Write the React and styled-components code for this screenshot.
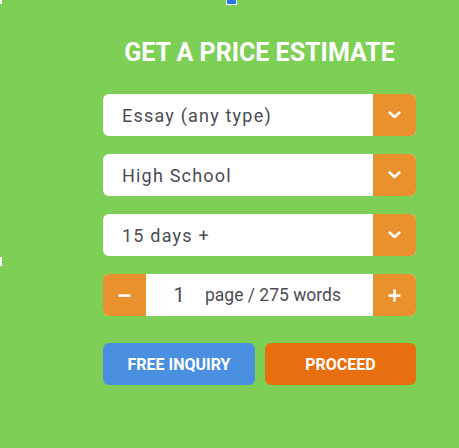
import React, { useState } from "react"
import styled, { createGlobalStyle } from "styled-components"

const GlobalStyle = createGlobalStyle`
  html, body {
    margin: 0;
    padding: 0;
    background: #7ecf55;
  }
  body {
    font-family: Roboto, "Liberation Sans", Arial, sans-serif;
  }
`

export const Page = styled.div`
  position: relative;
  height: 448px;
  background: #7ecf55;
  padding-top: 40px;
  box-sizing: border-box;
`

export const Handle = styled.span`
  position: absolute;
  top: ${props => props.top}px;
  left: ${props => props.left}px;
  width: ${props => props.w}px;
  height: ${props => props.h}px;
  background: ${props => props.color};
  border: 1px solid #ffffff;
  box-sizing: border-box;
`

export const Form = styled.div`
  width: 313px;
  margin-left: 103px;
  display: flex;
  flex-direction: column;
  gap: 18px;
`

export const Title = styled.h2`
  margin: 0 0 10px;
  text-align: center;
  color: #ffffff;
  font-size: 25px;
  line-height: 26px;
  font-weight: 700;
  text-transform: uppercase;
`

export const Field = styled.div`
  display: flex;
  height: 42px;
  border-radius: 6px;
  overflow: hidden;
  background: #ffffff;
`

export const FieldText = styled.div`
  flex: 1;
  display: flex;
  align-items: center;
  padding-left: 19px;
  color: #4b4b55;
  font-size: 18px;
  letter-spacing: 1.2px;
`

export const SideButton = styled.button`
  width: 43px;
  flex: none;
  border: 0;
  padding: 0;
  display: flex;
  align-items: center;
  justify-content: center;
  background: #e8912d;
  color: #ffffff;
  cursor: pointer;
`

export const Counter = styled.div`
  flex: 1;
  display: flex;
  align-items: center;
  gap: 14px;
  padding-left: 21px;
  color: #4b4b55;
  font-size: 17.5px;
`

export const Count = styled.span`
  width: 24px;
  text-align: center;
  font-size: 20px;
`

export const Actions = styled.div`
  display: grid;
  grid-template-columns: 152px 151px;
  gap: 10px;
  margin-top: 9px;
`

export const ActionButton = styled.button`
  height: 42px;
  border: 0;
  border-radius: 6px;
  background: ${props => (props.primary ? "#e86f10" : "#4a8fe0")};
  color: #ffffff;
  font-family: Roboto, "Liberation Sans", Arial, sans-serif;
  font-size: 16px;
  font-weight: 700;
  text-transform: uppercase;
  cursor: pointer;
`

const Chevron = () => (
  <svg width="13" height="8" viewBox="0 0 13 8" fill="none">
    <path d="M1.5 1.5 L6.5 6 L11.5 1.5" stroke="#fff" strokeWidth="2.4" strokeLinecap="round" strokeLinejoin="round" />
  </svg>
)

const Minus = () => (
  <svg width="13" height="13" viewBox="0 0 13 13">
    <rect x="0.5" y="5.3" width="12" height="2.6" fill="#fff" />
  </svg>
)

const Plus = () => (
  <svg width="13" height="13" viewBox="0 0 13 13">
    <rect x="0.5" y="5.3" width="12" height="2.6" fill="#fff" />
    <rect x="5.2" y="0.5" width="2.6" height="12" fill="#fff" />
  </svg>
)

const Select = ({ value }) => (
  <Field>
    <FieldText>{value}</FieldText>
    <SideButton aria-label="open">
      <Chevron />
    </SideButton>
  </Field>
)

const App = () => {
  const [pages, setPages] = useState(1)
  return (
    <>
      <GlobalStyle />
      <Page>
        <Handle top={-6} left={226} w={11} h={11} color="#2577e3" />
        <Handle top={-4} left={-6} w={8} h={8} color="#ffffff" />
        <Handle top={257} left={-6} w={8} h={9} color="#ffffff" />
        <Form>
          <Title>Get a price estimate</Title>
          <Select value="Essay (any type)" />
          <Select value="High School" />
          <Select value="15 days +" />
          <Field>
            <SideButton onClick={() => setPages(p => Math.max(1, p - 1))}>
              <Minus />
            </SideButton>
            <Counter>
              <Count>{pages}</Count>
              <span>page / {pages * 275} words</span>
            </Counter>
            <SideButton onClick={() => setPages(p => p + 1)}>
              <Plus />
            </SideButton>
          </Field>
          <Actions>
            <ActionButton>Free inquiry</ActionButton>
            <ActionButton primary>Proceed</ActionButton>
          </Actions>
        </Form>
      </Page>
    </>
  )
}

export default App
